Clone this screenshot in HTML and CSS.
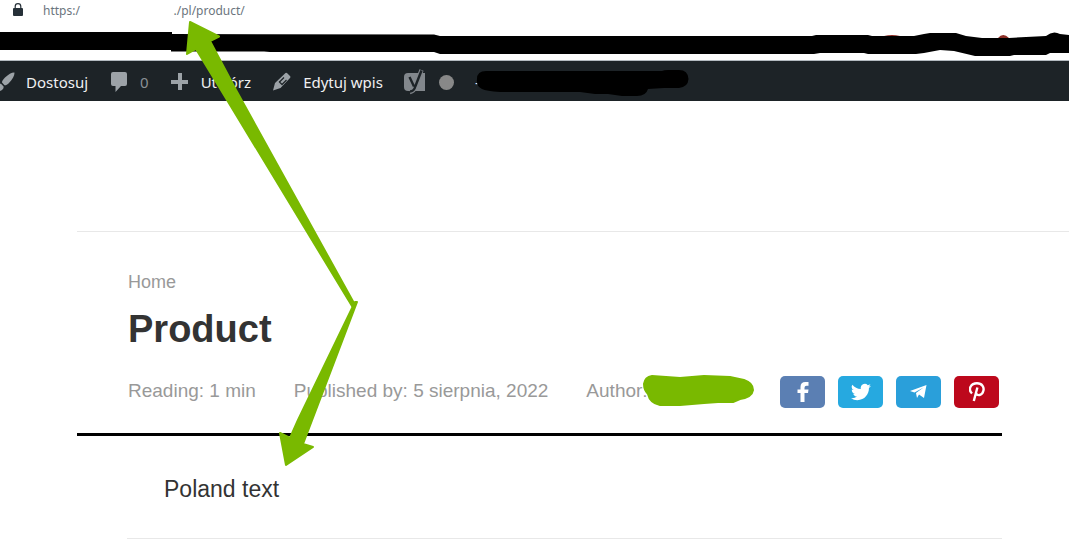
FILE: index.html
```html
<!DOCTYPE html>
<html lang="pl">
<head>
    <meta charset="UTF-8">
    <meta name="viewport" content="width=device-width, initial-scale=1.0">
    <title>Product</title>
    <link rel="stylesheet" href="styles.css">
</head>
<body>

<div class="address-bar">
    <svg class="lock" viewBox="0 0 10 14" width="10" height="14">
        <path d="M2.200 6V3.500a2.800 2.800 0 0 1 5.600 0V6" fill="none" stroke="#263038" stroke-width="1.200"/>
        <rect x="0" y="5" width="10" height="8" rx="1" fill="#263038"/>
    </svg>
    <input class="address" type="text" aria-label="Address" value="https:/                              ./pl/product/">
</div>

<nav class="admin-bar">
    <a href="#">
        <svg class="brush" viewBox="0 0 20 20" width="20" height="20">
            <path d="M19.400 0.500C19.800 3 18 7 13.500 11.500C12 13 10.500 13.500 9.500 13.200L7 10.500C7 9 8 7.500 10 5.500C13.500 2.200 17 0.300 19.400 0.500zM6 11.800L8.600 14.400C9 17 6.500 20 0 19.500C2.500 18 2 16.500 2.600 14.500C3.200 12.500 4.500 11.500 6 11.800z"/>
        </svg>
        Dostosuj
    </a>
    <a href="#" class="comments">
        <svg viewBox="0 0 20 20" width="20" height="20">
            <path d="M4 0h12q2 0 2 2v10q0 2-2 2h-4l-5.500 6V14H4q-2 0-2-2V2q0-2 2-2z"/>
        </svg>
        0
    </a>
    <a href="#">
        <svg viewBox="0 0 20 20" width="20" height="20">
            <path d="M8 1h4v7h6v4h-6v6H8v-6H1V8h7z"/>
        </svg>
        Utwórz
    </a>
    <a href="#">
        <svg viewBox="0 0 20 20" width="20" height="20">
            <path d="M13.500 1q1-.5 2 .5l2.500 2.500q1 1 0 2L8.500 16 1 18.500l2-7.500z"/>
            <path d="M7.500 10l4.500-4.500M10 12.500l4.500-4.500M7 9.500l3.500 3.500" fill="none" stroke="#1d2327" stroke-width="1.200"/>
        </svg>
        Edytuj wpis
    </a>
    <a href="#" class="seo" aria-label="SEO">
        <svg viewBox="0 0 22 26" width="22" height="26">
            <path d="M4 4h17v18H4q-4 0-4-4V8q0-4 4-4z" fill="#82878c"/>
            <path d="M17.500 1L11.500 17Q10 22.500 6 23" fill="none" stroke="#82878c" stroke-width="4.400"/>
            <path d="M5.500 8l4.500 9.500M17.500 1.500L11.500 17Q10 22.500 6 22.500" fill="none" stroke="#1d2327" stroke-width="2.400"/>
        </svg>
        <span class="status"></span>
    </a>
    <span>-</span>
</nav>

<header class="site-header"></header>

<main>
    <div class="post-head">
        <a class="breadcrumb" href="#">Home</a>
        <h1>Product</h1>
        <div class="post-info">
            <span>Reading: 1 min</span>
            <span>Published by: 5 sierpnia, 2022</span>
            <span>Author:</span>
            <div class="share">
                <a class="facebook" href="#" aria-label="Facebook">
                    <svg viewBox="0 0 12 20" width="12" height="20">
                        <path d="M3.500 20v-9H.5V7.500h3V5q0-5 5-5h3v3.800H9.500q-2 0-2 2v1.700h4l-.5 3.500H7.500v9z"/>
                    </svg>
                </a>
                <a class="twitter" href="#" aria-label="Twitter">
                    <svg viewBox="0 0 24 24" width="20" height="20">
                        <path d="M23.950 4.570a10 10 0 0 1-2.820.77 4.960 4.960 0 0 0 2.160-2.720c-.95.55-2 .95-3.130 1.180a4.920 4.920 0 0 0-8.380 4.480C7.690 8.090 4.070 6.130 1.640 3.160a4.920 4.920 0 0 0 1.520 6.570 4.900 4.900 0 0 1-2.230-.61v.06a4.920 4.920 0 0 0 3.950 4.830 5 5 0 0 1-2.210.08 4.940 4.940 0 0 0 4.600 3.420A9.870 9.870 0 0 1 0 19.540a13.990 13.990 0 0 0 7.550 2.210c9.050 0 13.990-7.500 13.990-13.980 0-.21 0-.42-.02-.63a9.940 9.940 0 0 0 2.430-2.570z"/>
                    </svg>
                </a>
                <a class="telegram" href="#" aria-label="Telegram">
                    <svg viewBox="0 0 17 14" width="17" height="14">
                        <path d="M16.500 0L14 13l-5-3.500L7 13l-1-5L13.500 2.500 4.500 7.500 0 6z"/>
                    </svg>
                </a>
                <a class="pinterest" href="#" aria-label="Pinterest">
                    <svg viewBox="0 0 16 20" width="16" height="20">
                        <path d="M3 11.500C-1.500 7 2 1.300 8 1.300C13 1.300 15.500 5 14.300 9C13 14 8.300 14 7 11.200M8.400 5.500L4.800 19" fill="none" stroke="#fff" stroke-width="2.400"/>
                    </svg>
                </a>
            </div>
        </div>
    </div>
    <div class="post-content">
        <p>Poland text</p>
    </div>
</main>

<!-- Arrows and hidden parts drawn over the page -->
<svg class="marks" viewBox="0 0 1069 555" width="1069" height="555" aria-hidden="true">
    <path d="M884 36q8-2 16 0zM998 38q5-6 11 0z" fill="#8c2d25"/>
    <path d="M0 32H172V34L434 34.500L440 36H812L816 35H868L872 36H914L924 34L930 33H956L966 36L982 38H1009L1046 36Q1053 30 1060 34L1069 35V53H1050L1046 55H1014L1010 56H975L954 51L940 50L924 53L916 54H868L864 53H820L814 54H440L434 52H270L264 51.500H171V50H0z"/>
    <path d="M486 71H662Q664 70 668 70H679Q688 70 688.500 79Q688 87 679 88H664L648 89Q646 96 637 96H622L608 94H595L580 92H500Q486 91 482 89Q476 86 477 79Q477 71 486 71z"/>
    <g fill="#79b900" stroke="#79b900" stroke-width="2" stroke-linejoin="round">
        <path d="M190 22L219 36.500L210 41L236 90L355 305L352 306L221 90L196 49L187 54z"/>
        <path d="M355 302L357 302L303 444L313 447L286 465L280 433L290 438L298 420z"/>
        <path d="M652 376L680 378L704 376L730 377L744 380Q753 383 753 390Q752 397 740 399L733 402H718L704 403L680 405H660Q650 403 648 394Q644 390 644 384Q645 377 652 376z"/>
    </g>
</svg>

</body>
</html>
```
FILE: styles.css
```css
* {
    box-sizing: border-box;
}

body {
    position: relative;
    margin: 0;
    background-color: #fff;
    font-family: "Liberation Sans", Arial, sans-serif;
    color: #333;
    overflow-x: hidden;
}

a {
    color: inherit;
    text-decoration: none;
}

svg {
    flex-shrink: 0;
}

.address-bar {
    display: flex;
    align-items: flex-start;
    gap: 20px;
    height: 60px;
    padding: 3px 13px;
}

.address {
    flex: 1;
    height: 16px;
    padding: 0;
    border: none;
    outline: none;
    background: none;
    font-family: "Noto Sans", sans-serif;
    font-size: 12px;
    line-height: 16px;
    color: #6b757d;
}

.admin-bar {
    display: flex;
    align-items: center;
    gap: 21px;
    height: 41px;
    padding-top: 2px;
    border-top: 1px solid #b4bac0;
    background-color: #1d2327;
    color: #f0f0f1;
    font-family: "Noto Sans", sans-serif;
    font-size: 15px;
    line-height: 38px;
}

.admin-bar a {
    display: flex;
    align-items: center;
    gap: 11px;
    white-space: nowrap;
}

.admin-bar svg {
    fill: #9ca2a7;
}

.admin-bar .brush {
    margin-left: -5px;
}

.admin-bar .comments {
    color: #8a9095;
}

.admin-bar .seo {
    gap: 13px;
}

.status {
    width: 15px;
    height: 15px;
    border-radius: 50%;
    background-color: #888;
}

.site-header {
    height: 131px;
    margin-left: 77px;
    border-bottom: 1px solid #e8e8e8;
}

main {
    margin: 0 67px 0 77px;
}

.post-head {
    padding: 39px 3px 25px 51px;
    border-bottom: 3px solid #000;
}

.breadcrumb {
    display: block;
    font-size: 18px;
    line-height: 22px;
    color: #999;
}

h1 {
    margin: 14px 0 25px;
    font-size: 38px;
    line-height: 44px;
}

.post-info {
    display: flex;
    align-items: flex-start;
    gap: 38px;
    font-size: 19px;
    line-height: 30px;
    color: #999;
    white-space: nowrap;
}

.share {
    display: flex;
    gap: 13px;
    margin-left: auto;
}

.share a {
    display: flex;
    align-items: center;
    justify-content: center;
    width: 45px;
    height: 32px;
    border-radius: 5px;
}

.share svg {
    fill: #fff;
}

.facebook {
    background-color: #5b7fb3;
}

.twitter {
    background-color: #26a9e0;
}

.telegram {
    background-color: #2a9fda;
}

.pinterest {
    background-color: #bd081c;
}

.post-content {
    margin-left: 50px;
    padding: 39px 37px 35px;
    border-bottom: 1px solid #e8e8e8;
}

.post-content p {
    margin: 0;
    font-size: 23px;
    line-height: 28px;
}

.marks {
    position: absolute;
    top: 0;
    left: 0;
    pointer-events: none;
}
```
